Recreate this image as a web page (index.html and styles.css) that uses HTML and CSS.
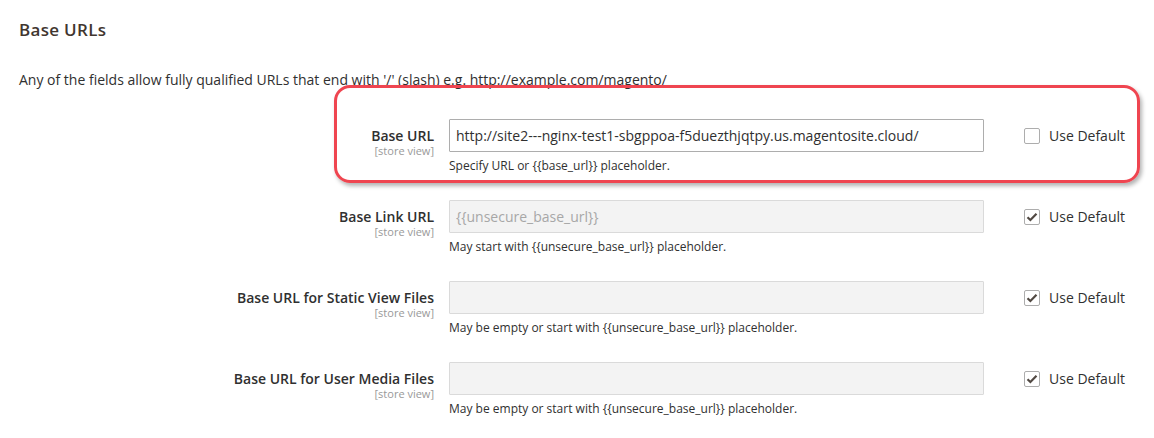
FILE: index.html
```html
<!DOCTYPE html>
<html>
<head>
<meta charset="utf-8">
<link rel="stylesheet" href="styles.css">
</head>
<body>
<div class="page">
  <h2 class="title">Base URLs</h2>
  <p class="intro">Any of the fields allow fully qualified URLs that end with '/' (slash) e.g. http://example.com/magento/</p>

  <div class="fields">
    <div class="row row-highlight">
      <div class="highlight"></div>
      <div class="label"><span class="label-text">Base URL</span><span class="scope">[store view]</span></div>
      <div class="control">
        <input class="input" type="text" value="http://site2---nginx-test1-sbgppoa-f5duezthjqtpy.us.magentosite.cloud/">
        <div class="note">Specify URL or {{base_url}} placeholder.</div>
      </div>
      <label class="use-default"><span class="checkbox"></span><span>Use Default</span></label>
    </div>

    <div class="row">
      <div class="label"><span class="label-text">Base Link URL</span><span class="scope">[store view]</span></div>
      <div class="control">
        <input class="input" type="text" value="{{unsecure_base_url}}" disabled>
        <div class="note">May start with {{unsecure_base_url}} placeholder.</div>
      </div>
      <label class="use-default"><span class="checkbox checked"><svg width="12" height="10" viewBox="0 0 12 10"><path d="M1.5 5.2 L4.4 8 L10.5 1.8" fill="none" stroke="#514943" stroke-width="2.2"/></svg></span><span>Use Default</span></label>
    </div>

    <div class="row">
      <div class="label"><span class="label-text">Base URL for Static View Files</span><span class="scope">[store view]</span></div>
      <div class="control">
        <input class="input" type="text" value="" disabled>
        <div class="note">May be empty or start with {{unsecure_base_url}} placeholder.</div>
      </div>
      <label class="use-default"><span class="checkbox checked"><svg width="12" height="10" viewBox="0 0 12 10"><path d="M1.5 5.2 L4.4 8 L10.5 1.8" fill="none" stroke="#514943" stroke-width="2.2"/></svg></span><span>Use Default</span></label>
    </div>

    <div class="row">
      <div class="label"><span class="label-text">Base URL for User Media Files</span><span class="scope">[store view]</span></div>
      <div class="control">
        <input class="input" type="text" value="" disabled>
        <div class="note">May be empty or start with {{unsecure_base_url}} placeholder.</div>
      </div>
      <label class="use-default"><span class="checkbox checked"><svg width="12" height="10" viewBox="0 0 12 10"><path d="M1.5 5.2 L4.4 8 L10.5 1.8" fill="none" stroke="#514943" stroke-width="2.2"/></svg></span><span>Use Default</span></label>
    </div>
  </div>
</div>
</body>
</html>
```

FILE: styles.css
```css
html, body {
  margin: 0;
  padding: 0;
  background: #ffffff;
}

body {
  font-family: "Open Sans", "Liberation Sans", sans-serif;
  color: #303030;
  width: 1154px;
  height: 438px;
  overflow: hidden;
}

.page {
  padding: 19px 19px 0 19px;
}

.title {
  margin: 0;
  font-size: 17px;
  font-weight: 600;
  line-height: 22px;
  color: #41362f;
  letter-spacing: 0.3px;
}

.intro {
  margin: 29px 0 0 0;
  font-size: 14px;
  line-height: 19px;
  color: #303030;
}

.fields {
  margin-top: 30px;
}

.row {
  display: flex;
  align-items: flex-start;
  margin-bottom: 26px;
}

.row-highlight {
  position: relative;
}

.highlight {
  position: absolute;
  left: 315px;
  top: -34px;
  width: 806px;
  height: 98px;
  box-sizing: border-box;
  border: 3px solid #ef4550;
  border-radius: 16px;
  box-shadow: 2px 3px 4px rgba(0, 0, 0, 0.3);
  pointer-events: none;
}

.label {
  width: 415px;
  flex: none;
  display: flex;
  flex-direction: column;
  align-items: flex-end;
  padding-top: 7px;
}

.label-text {
  font-size: 14px;
  font-weight: 600;
  line-height: 19px;
  color: #303030;
}

.scope {
  font-size: 11px;
  line-height: 13px;
  margin-top: -1px;
  color: #999999;
}

.control {
  margin-left: 15px;
  width: 535px;
  flex: none;
}

.input {
  display: block;
  box-sizing: border-box;
  width: 535px;
  height: 33px;
  margin: 0;
  padding: 0 6px;
  border: 1px solid #adadad;
  border-radius: 1px;
  background: #ffffff;
  font-family: "Open Sans", "Liberation Sans", sans-serif;
  font-size: 14px;
  color: #303030;
  outline: none;
}

.input:disabled {
  background: #f3f3f3;
  border-color: #dadada;
  color: #a7a7a7;
  opacity: 1;
}

.note {
  margin-top: 5px;
  font-size: 12px;
  line-height: 17px;
  color: #303030;
}

.use-default {
  margin-left: 40px;
  display: flex;
  align-items: center;
  padding-top: 7px;
  font-size: 14px;
  line-height: 19px;
  color: #303030;
}

.checkbox {
  box-sizing: border-box;
  width: 16px;
  height: 16px;
  border: 1px solid #adadad;
  border-radius: 2px;
  background: #ffffff;
  margin-right: 9px;
  display: flex;
  align-items: center;
  justify-content: center;
}
```
